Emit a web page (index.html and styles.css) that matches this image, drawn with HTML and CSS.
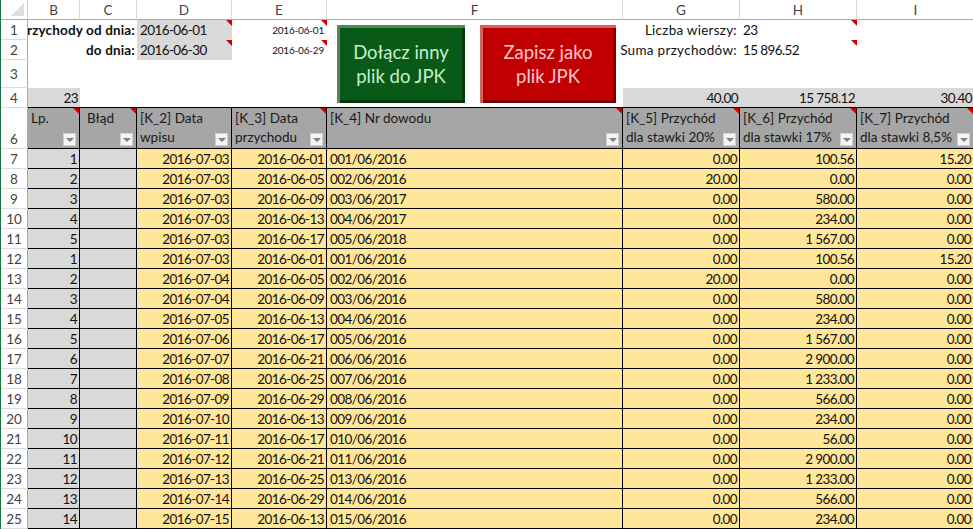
FILE: index.html
```html
<!DOCTYPE html>
<html lang="pl">
<head>
<meta charset="utf-8">
<title>JPK przychody</title>
<link rel="stylesheet" href="styles.css">
</head>
<body>
<div class="sheet">
  <!-- column headers -->
  <div class="corner"><span class="corner-tri"></span></div>
  <div class="ch">B</div><div class="ch">C</div><div class="ch">D</div><div class="ch">E</div>
  <div class="ch">F</div><div class="ch">G</div><div class="ch">H</div><div class="ch ch-last">I</div>

  <!-- row 1 -->
  <div class="rh">1</div>
  <div class="label span2"><span>Przychody od dnia:</span></div>
  <div class="c gray cm n">2016-06-01</div>
  <div class="c small r cm">2016-06-01</div>
  <div class="c"></div>
  <div class="c r txt">Liczba wierszy:</div>
  <div class="c cm n">23</div>
  <div class="c"></div>

  <!-- row 2 -->
  <div class="rh">2</div>
  <div class="label span2"><span>do dnia:</span></div>
  <div class="c gray cm n">2016-06-30</div>
  <div class="c small r cm">2016-06-29</div>
  <div class="c"></div>
  <div class="over"><span>Suma przychodów:</span></div>
  <div class="c cm n">15 896.52</div>
  <div class="c"></div>

  <!-- row 3 -->
  <div class="rh">3</div>
  <div class="c span8"></div>

  <!-- row 4 -->
  <div class="rh">4</div>
  <div class="c gray r tb n">23</div>
  <div class="c tb"></div>
  <div class="c tb"></div>
  <div class="c tb"></div>
  <div class="c tb"></div>
  <div class="c gray r tb n">40.00</div>
  <div class="c gray r tb n">15 758.12</div>
  <div class="c gray r tb n">30.40</div>

  <!-- row 6: table header -->
  <div class="rh rh-bottom">6</div>
  <div class="th cm">Lp.<span class="flt"></span></div>
  <div class="th th-blad cm">Błąd<span class="flt"></span></div>
  <div class="th">[K_2] Data<br>wpisu<span class="flt"></span></div>
  <div class="th cm">[K_3] Data<br>przychodu<span class="flt"></span></div>
  <div class="th cm">[K_4] Nr dowodu<span class="flt"></span></div>
  <div class="th cm">[K_5] Przychód<br>dla stawki 20%<span class="flt"></span></div>
  <div class="th cm">[K_6] Przychód<br>dla stawki 17%<span class="flt"></span></div>
  <div class="th cm">[K_7] Przychód<br>dla stawki 8,5%<span class="flt"></span></div>

  <div class="rh">7</div><div class="td g r">1</div><div class="td g"></div><div class="td y r">2016-07-03</div><div class="td y r">2016-06-01</div><div class="td y">001/06/2016</div><div class="td y r">0.00</div><div class="td y r">100.56</div><div class="td y r">15.20</div>
  <div class="rh">8</div><div class="td g r">2</div><div class="td g"></div><div class="td y r">2016-07-03</div><div class="td y r">2016-06-05</div><div class="td y">002/06/2016</div><div class="td y r">20.00</div><div class="td y r">0.00</div><div class="td y r">0.00</div>
  <div class="rh">9</div><div class="td g r">3</div><div class="td g"></div><div class="td y r">2016-07-03</div><div class="td y r">2016-06-09</div><div class="td y">003/06/2017</div><div class="td y r">0.00</div><div class="td y r">580.00</div><div class="td y r">0.00</div>
  <div class="rh">10</div><div class="td g r">4</div><div class="td g"></div><div class="td y r">2016-07-03</div><div class="td y r">2016-06-13</div><div class="td y">004/06/2017</div><div class="td y r">0.00</div><div class="td y r">234.00</div><div class="td y r">0.00</div>
  <div class="rh">11</div><div class="td g r">5</div><div class="td g"></div><div class="td y r">2016-07-03</div><div class="td y r">2016-06-17</div><div class="td y">005/06/2018</div><div class="td y r">0.00</div><div class="td y r">1 567.00</div><div class="td y r">0.00</div>
  <div class="rh">12</div><div class="td g r">1</div><div class="td g"></div><div class="td y r">2016-07-03</div><div class="td y r">2016-06-01</div><div class="td y">001/06/2016</div><div class="td y r">0.00</div><div class="td y r">100.56</div><div class="td y r">15.20</div>
  <div class="rh">13</div><div class="td g r">2</div><div class="td g"></div><div class="td y r">2016-07-04</div><div class="td y r">2016-06-05</div><div class="td y">002/06/2016</div><div class="td y r">20.00</div><div class="td y r">0.00</div><div class="td y r">0.00</div>
  <div class="rh">14</div><div class="td g r">3</div><div class="td g"></div><div class="td y r">2016-07-04</div><div class="td y r">2016-06-09</div><div class="td y">003/06/2016</div><div class="td y r">0.00</div><div class="td y r">580.00</div><div class="td y r">0.00</div>
  <div class="rh">15</div><div class="td g r">4</div><div class="td g"></div><div class="td y r">2016-07-05</div><div class="td y r">2016-06-13</div><div class="td y">004/06/2016</div><div class="td y r">0.00</div><div class="td y r">234.00</div><div class="td y r">0.00</div>
  <div class="rh">16</div><div class="td g r">5</div><div class="td g"></div><div class="td y r">2016-07-06</div><div class="td y r">2016-06-17</div><div class="td y">005/06/2016</div><div class="td y r">0.00</div><div class="td y r">1 567.00</div><div class="td y r">0.00</div>
  <div class="rh">17</div><div class="td g r">6</div><div class="td g"></div><div class="td y r">2016-07-07</div><div class="td y r">2016-06-21</div><div class="td y">006/06/2016</div><div class="td y r">0.00</div><div class="td y r">2 900.00</div><div class="td y r">0.00</div>
  <div class="rh">18</div><div class="td g r">7</div><div class="td g"></div><div class="td y r">2016-07-08</div><div class="td y r">2016-06-25</div><div class="td y">007/06/2016</div><div class="td y r">0.00</div><div class="td y r">1 233.00</div><div class="td y r">0.00</div>
  <div class="rh">19</div><div class="td g r">8</div><div class="td g"></div><div class="td y r">2016-07-09</div><div class="td y r">2016-06-29</div><div class="td y">008/06/2016</div><div class="td y r">0.00</div><div class="td y r">566.00</div><div class="td y r">0.00</div>
  <div class="rh">20</div><div class="td g r">9</div><div class="td g"></div><div class="td y r">2016-07-10</div><div class="td y r">2016-06-13</div><div class="td y">009/06/2016</div><div class="td y r">0.00</div><div class="td y r">234.00</div><div class="td y r">0.00</div>
  <div class="rh">21</div><div class="td g r">10</div><div class="td g"></div><div class="td y r">2016-07-11</div><div class="td y r">2016-06-17</div><div class="td y">010/06/2016</div><div class="td y r">0.00</div><div class="td y r">56.00</div><div class="td y r">0.00</div>
  <div class="rh">22</div><div class="td g r">11</div><div class="td g"></div><div class="td y r">2016-07-12</div><div class="td y r">2016-06-21</div><div class="td y">011/06/2016</div><div class="td y r">0.00</div><div class="td y r">2 900.00</div><div class="td y r">0.00</div>
  <div class="rh">23</div><div class="td g r">12</div><div class="td g"></div><div class="td y r">2016-07-13</div><div class="td y r">2016-06-25</div><div class="td y">013/06/2016</div><div class="td y r">0.00</div><div class="td y r">1 233.00</div><div class="td y r">0.00</div>
  <div class="rh">24</div><div class="td g r">13</div><div class="td g"></div><div class="td y r">2016-07-14</div><div class="td y r">2016-06-29</div><div class="td y">014/06/2016</div><div class="td y r">0.00</div><div class="td y r">566.00</div><div class="td y r">0.00</div>
  <div class="rh">25</div><div class="td g r">14</div><div class="td g"></div><div class="td y r">2016-07-15</div><div class="td y r">2016-06-13</div><div class="td y">015/06/2016</div><div class="td y r">0.00</div><div class="td y r">234.00</div><div class="td y r">0.00</div>

  <!-- floating shapes (macro buttons) -->
  <div class="btn btn-green">Dołącz inny<br>plik do JPK</div>
  <div class="btn btn-red">Zapisz jako<br>plik JPK</div>
</div>
</body>
</html>
```

FILE: styles.css
```css
* { box-sizing: border-box; }
html, body { margin: 0; padding: 0; background: #fff; }
body { width: 973px; height: 529px; overflow: hidden; }

.sheet {
  position: relative;
  display: grid;
  grid-template-columns: 27px 52px 57px 95px 95px 296px 117px 117px 117px;
  grid-template-rows: 20px 20px 20px 28px 20px 41px repeat(19, 20px);
  font-family: Lato, "Liberation Sans", sans-serif;
  font-size: 13.5px;
  color: #111;
  border-left: 1px solid #217346;
}

/* headers */
.corner {
  position: relative;
  background: #fff;
  border-right: 1px solid #d0d0d0;
  border-bottom: 1px solid #ababab;
}
.corner-tri {
  position: absolute;
  right: 3px; bottom: 3px;
  width: 0; height: 0;
  border-left: 13px solid transparent;
  border-bottom: 13px solid #dfdfdf;
}
.ch {
  display: flex; align-items: center; justify-content: center;
  color: #444;
  font-size: 13.5px;
  background: #fff;
  border-right: 1px solid #d8d8d8;
  border-bottom: 1px solid #ababab;
}
.ch-last { border-right: none; }
.rh {
  display: flex; align-items: center; justify-content: center;
  color: #444;
  font-size: 13.5px;
  background: #fff;
  border-right: 1px solid #ababab;
  border-bottom: 1px solid #dcdcdc;
}
.rh-bottom { align-items: flex-end; padding-bottom: 1px; }

/* plain cells */
.c {
  position: relative;
  display: flex; align-items: center;
  white-space: nowrap;
  padding: 0 2px 0 3px;
}
.c.r { justify-content: flex-end; }
.c.txt { letter-spacing: 0.25px; padding-right: 3px; }
.c.small { font-size: 10px; padding-right: 3px; letter-spacing: -0.2px; }
.n { letter-spacing: -0.6px; }
.gray { background: #d9d9d9; }
.span2 { grid-column: span 2; }
.span8 { grid-column: span 8; }
.tb { border-bottom: 1px solid #000; }

.label, .over {
  display: flex; align-items: center; justify-content: flex-end;
  overflow: hidden;
  white-space: nowrap;
  font-weight: bold;
  padding-right: 2px;
  letter-spacing: 0.15px;
}
.over {
  font-weight: normal;
  overflow: visible;
  padding-right: 3px;
  letter-spacing: 0.3px;
}

/* comment indicator */
.cm { position: relative; }
.cm::after {
  content: "";
  position: absolute;
  top: 0; right: 0;
  width: 0; height: 0;
  border-top: 6px solid #d00000;
  border-left: 6px solid transparent;
}

/* table header */
.th {
  position: relative;
  background: #a6a6a6;
  color: #1a1a1a;
  line-height: 19px;
  padding: 1px 2px 0 3px;
  white-space: nowrap;
  border-right: 1px solid #000;
  border-bottom: 1px solid #000;
}
.th-blad { padding-left: 7px; }
.flt {
  position: absolute;
  right: 3px; bottom: 2px;
  width: 13px; height: 13px;
  background: #f4f4f4;
  border: 1px solid #d0d0d0;
}
.flt::after {
  content: "";
  position: absolute;
  left: 2px; top: 4px;
  border-left: 4px solid transparent;
  border-right: 4px solid transparent;
  border-top: 4px solid #808080;
}

/* data cells */
.td {
  display: flex; align-items: center;
  white-space: nowrap;
  padding: 1px 2px 0 3px;
  letter-spacing: -0.6px;
  border-right: 1px solid #000;
  border-bottom: 1px solid #000;
}
.td.r { justify-content: flex-end; }
.g { background: #d9d9d9; }
.y { background: #ffe699; }

/* macro buttons (floating shapes over the grid) */
.btn {
  position: absolute;
  top: 25px;
  height: 78px;
  display: flex; align-items: center; justify-content: center;
  text-align: center;
  font-family: Lato, "Liberation Sans", sans-serif;
  font-size: 18.5px;
  line-height: 24px;
}
.btn-green {
  left: 336px; width: 128px;
  background: #0a5a17;
  color: #c6efce;
  box-shadow: inset 3px 3px 0 #4f8a57, inset -3px -3px 0 #03380b;
}
.btn-red {
  left: 479px; width: 136px;
  background: #c00000;
  color: #ffc7ce;
  box-shadow: inset 3px 3px 0 #d86060, inset -3px -3px 0 #7a0000;
}
```
